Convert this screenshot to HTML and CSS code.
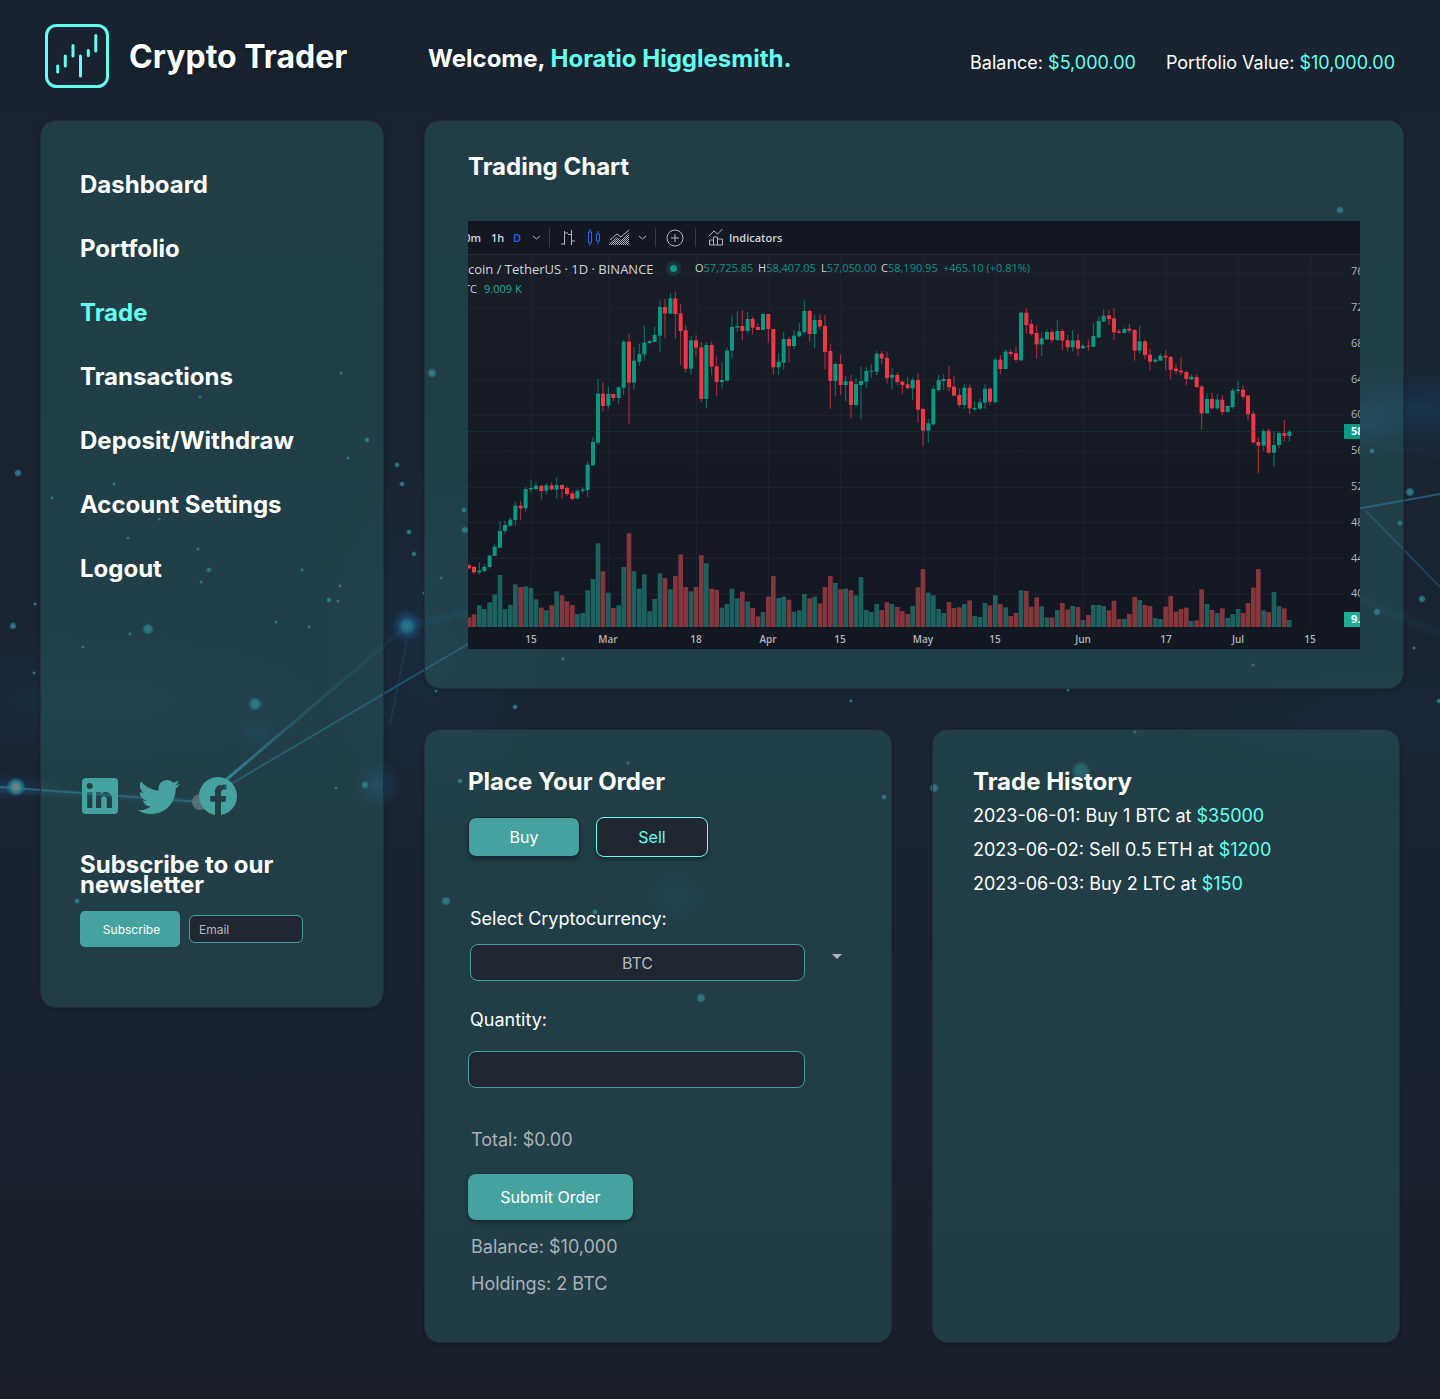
FILE: index.html
```html
<!DOCTYPE html>
<html lang="en">
<head>
<meta charset="utf-8">
<meta name="viewport" content="width=device-width, initial-scale=1">
<title>Crypto Trader</title>
<link rel="stylesheet" href="styles.css">
</head>
<body>
<svg class="scene" viewBox="0 0 1440 1399" preserveAspectRatio="xMidYMin slice" aria-hidden="true">
  <defs>
    <radialGradient id="glow"><stop offset="0" stop-color="#1f6a9c" stop-opacity=".8"/><stop offset="1" stop-color="#1f5f9c" stop-opacity="0"/></radialGradient>
    <radialGradient id="dot"><stop offset="0" stop-color="#348a90"/><stop offset=".6" stop-color="#2b7d89" stop-opacity=".9"/><stop offset="1" stop-color="#1f6a90" stop-opacity="0"/></radialGradient>
    <linearGradient id="ray" gradientUnits="userSpaceOnUse" x1="220" y1="785" x2="407" y2="626"><stop offset="0" stop-color="#2f94a0"/><stop offset=".4" stop-color="#256080" stop-opacity=".5"/><stop offset="1" stop-color="#256080" stop-opacity=".1"/></linearGradient>
  </defs>
  <g fill="url(#glow)">
    <ellipse cx="100" cy="700" rx="240" ry="70" opacity=".14"/>
    <ellipse cx="430" cy="650" rx="120" ry="190" opacity=".12"/>
    <ellipse cx="1420" cy="410" rx="170" ry="44" opacity=".3"/>
    <ellipse cx="1364" cy="423" rx="40" ry="24" opacity=".25"/>
    <ellipse cx="1420" cy="720" rx="260" ry="60" opacity=".08"/>
    <ellipse cx="0" cy="787" rx="64" ry="14" opacity=".4"/>
    <circle cx="407" cy="626" r="17"/>
    <circle cx="378" cy="785" r="24" opacity=".4"/>
    <circle cx="257" cy="733" r="20" opacity=".22"/>
    <circle cx="676" cy="897" r="28" opacity=".18"/>
  </g>
  <g fill="none" stroke="#256f95">
    <path d="M220 785 407 626" stroke="url(#ray)" stroke-width="3"/>
    <path d="M224 788 480 637" stroke-width="2" opacity=".6"/>
    <path d="M0 787 200 802" stroke="#2f94a0" stroke-width="2" opacity=".5"/>
    <path d="M0 789 200 802" stroke-width="7" opacity=".15"/>
    <path d="M407 640 390 725" stroke-width="2" opacity=".2"/>
    <path d="M415 624 480 610" stroke-width="8" opacity=".12"/>
    <path d="M1340 512 1440 494" stroke-width="2" opacity=".7"/>
    <path d="M1365 510 1440 587" stroke-width="2" opacity=".4"/>
    <path d="M1350 594 1440 634" stroke-width="8" opacity=".08"/>
    <path d="M1350 440 1440 455" stroke-width="8" opacity=".06"/>
  </g>
  <circle cx="200" cy="802" r="8" fill="#7b8082" opacity=".75"/>
  <circle cx="16" cy="787" r="10" fill="url(#dot)"/>
  <circle cx="16" cy="787" r="4" fill="#7b8082" opacity=".7"/>
  <g id="stars" fill="url(#dot)"></g>
</svg>

<div class="page">
  <header class="topbar">
    <div class="brand">
      <svg class="logo" viewBox="0 0 64 64" aria-hidden="true">
        <rect x="1.5" y="1.5" width="61" height="61" rx="10"/>
        <path d="M12.700 42v6M20.300 32v10M28 21.500v10.500M35.500 32v20M43.300 26.500v5M50.800 11.500v15.500"/>
      </svg>
      <span class="brand-name">Crypto Trader</span>
    </div>
    <div class="account">
      <p class="welcome">Welcome, <span class="accent">Horatio Higglesmith.</span></p>
      <div class="figures">
        <span>Balance: <span class="accent">$5,000.00</span></span>
        <span>Portfolio Value: <span class="accent">$10,000.00</span></span>
      </div>
    </div>
  </header>

  <div class="layout">
    <aside class="panel sidebar">
      <nav class="menu">
        <a href="#dashboard">Dashboard</a>
        <a href="#portfolio">Portfolio</a>
        <a href="#trade" class="current" aria-current="page">Trade</a>
        <a href="#transactions">Transactions</a>
        <a href="#deposit">Deposit/Withdraw</a>
        <a href="#settings">Account Settings</a>
        <a href="#logout">Logout</a>
      </nav>
      <div class="social">
        <a href="#linkedin" aria-label="LinkedIn"><svg viewBox="2 2 20 20"><path d="M19 3a2 2 0 0 1 2 2v14a2 2 0 0 1-2 2H5a2 2 0 0 1-2-2V5a2 2 0 0 1 2-2h14m-1 15v-4.800a3.260 3.260 0 0 0-3.260-3.260c-.85 0-1.840.52-2.320 1.300v-1.110h-2.420v7.870h2.600v-4.430c0-.77.62-1.400 1.390-1.400a1.400 1.400 0 0 1 1.400 1.400v4.430h2.610M6.880 8.560a1.500 1.500 0 0 0 1.500-1.500c0-.83-.67-1.500-1.500-1.500a1.500 1.500 0 0 0-1.500 1.500c0 .83.67 1.500 1.500 1.500m1.300 9.440v-7.870H5.600v7.870h2.580z"/></svg></a>
        <a href="#twitter" aria-label="Twitter"><svg viewBox="2 2 20 20"><path d="M22.460 6c-.77.35-1.600.58-2.460.69.88-.53 1.560-1.370 1.880-2.380-.83.5-1.750.85-2.720 1.050C18.370 4.500 17.260 4 16 4c-2.350 0-4.270 1.920-4.270 4.290 0 .34.04.67.11.98C8.280 9.090 5.110 7.380 3 4.790c-.37.63-.58 1.370-.58 2.150 0 1.490.75 2.810 1.910 3.560-.71 0-1.370-.2-1.950-.5v.03c0 2.080 1.480 3.820 3.440 4.210a4.220 4.220 0 0 1-1.930.07 4.280 4.280 0 0 0 4 2.980 8.521 8.521 0 0 1-5.330 1.840c-.34 0-.68-.02-1.020-.06C3.440 20.290 5.700 21 8.120 21 16 21 20.330 14.460 20.330 8.790c0-.19 0-.37-.01-.56.84-.6 1.560-1.360 2.140-2.230z"/></svg></a>
        <a href="#facebook" aria-label="Facebook"><svg viewBox="1.500 1.500 21 21"><path d="M12 2.040C6.500 2.040 2 6.530 2 12.060C2 17.060 5.660 21.210 10.440 21.960V14.960H7.900V12.060H10.440V9.850C10.440 7.340 11.930 5.960 14.220 5.960C15.310 5.960 16.450 6.150 16.450 6.150V8.620H15.190C13.950 8.620 13.560 9.390 13.560 10.180V12.060H16.340L15.890 14.960H13.560V21.960A10 10 0 0 0 22 12.060C22 6.530 17.500 2.040 12 2.040Z"/></svg></a>
      </div>
      <h2 class="newsletter-title">Subscribe to our newsletter</h2>
      <form class="newsletter">
        <button type="button" class="subscribe">Subscribe</button>
        <input class="email" type="email" placeholder="Email" aria-label="Email">
      </form>
    </aside>

    <main class="content">
      <section class="panel chart-panel">
        <h2>Trading Chart</h2>
        <svg class="chart" viewBox="0 0 892 428" role="img" aria-label="Bitcoin / TetherUS daily candlestick chart">
          <defs>
            <linearGradient id="plot" x2="0" y2="1"><stop offset="0" stop-color="#191d28"/><stop offset="1" stop-color="#131722"/></linearGradient>
            <pattern id="hatch" width="2" height="2" patternUnits="userSpaceOnUse"><path d="M0 0h1v1H0zM1 1h1v1H1z" fill="#b2b5be"/></pattern>
          </defs>
          <rect width="892" height="428" fill="#131722"/>
          <rect y="34" width="892" height="372" fill="url(#plot)"/>
          <path d="M0 33.500h892" stroke="#2a2e39"/>

          <g class="tools">
            <text x="13" y="21" text-anchor="end">30m</text>
            <text x="23" y="21">1h</text>
            <text x="45" y="21" class="on">D</text>
            <text x="261" y="21">Indicators</text>
            <path d="M81.500 7v19M187.500 7v19M227.500 7v19" class="rule"/>
            <g class="glyph">
              <path d="m65 15 3.500 3 3.500-3M171 15l3.500 3 3.500-3"/>
              <path d="M96.500 10v14M93 23h3.500M96.500 12h3.500M103.500 9v15M100 13.500h3.500M103.500 20h3.500"/>
              <circle cx="207" cy="17" r="8"/><path d="M203 17h8M207 13v8"/>
              <path d="M241.500 24v-5h4v5zM245.500 24v-8h4v8zM249.500 24v-6h5v6zM241 15l5-5 3.500 3 5-5"/>
              <path d="m142 19 7-6 4 3 8-7"/>
            </g>
            <path d="m141 24 0-2 8-6 4 3 8-7v12z" fill="url(#hatch)"/>
            <path class="glyph-on" d="M120.500 11h3v11h-3zM122 8v3M122 22v3M128.500 13h3v7h-3zM130 10v3M130 20v3"/>
          </g>

          <g id="plot-data" transform="scale(.333333)"></g>

          <text class="pair" x="0" y="53">coin / TetherUS · 1D · BINANCE</text>
          <circle cx="205.500" cy="47.500" r="7.500" fill="#17353b"/><circle cx="205.500" cy="47.500" r="3.500" fill="#089981"/>
          <g class="ohlc">
            <text x="227" y="51">O<tspan>57,725.85</tspan></text>
            <text x="290" y="51">H<tspan>58,407.05</tspan></text>
            <text x="353" y="51">L<tspan>57,050.00</tspan></text>
            <text x="413" y="51">C<tspan>58,190.95</tspan></text>
            <text x="475" y="51"><tspan>+465.10 (+0.81%)</tspan></text>
            <text x="9" y="72" text-anchor="end">TC</text>
            <text x="16" y="72"><tspan class="vol">9.009 K</tspan></text>
          </g>

          <g class="axis">
            <text x="883" y="54">76</text><text x="883" y="90">72</text><text x="883" y="126">68</text>
            <text x="883" y="162">64</text><text x="883" y="197">60</text><text x="883" y="233">56</text>
            <text x="883" y="269">52</text><text x="883" y="305">48</text><text x="883" y="341">44</text>
            <text x="883" y="376">40</text>
            <rect x="876" y="203" width="16" height="15" fill="#089981"/><text x="883" y="214" class="tag">58</text>
            <rect x="876" y="391" width="16" height="15" fill="#22ab94"/><text x="883" y="402" class="tag">9.</text>
          </g>
          <g class="axis dates">
            <text x="63" y="422">15</text><text x="140" y="422">Mar</text><text x="228" y="422">18</text>
            <text x="300" y="422">Apr</text><text x="372" y="422">15</text><text x="455" y="422">May</text>
            <text x="527" y="422">15</text><text x="615" y="422">Jun</text><text x="698" y="422">17</text>
            <text x="770" y="422">Jul</text><text x="842" y="422">15</text>
          </g>
        </svg>
      </section>

      <div class="lower">
        <section class="panel order">
          <h2>Place Your Order</h2>
          <form>
            <div class="sides">
              <button type="button" class="side buy">Buy</button>
              <button type="button" class="side sell">Sell</button>
            </div>
            <label for="coin" class="coin-label">Select Cryptocurrency:</label>
            <div class="coin-row">
              <select id="coin" class="field"><option>BTC</option><option>ETH</option><option>LTC</option></select>
              <svg class="caret" viewBox="0 0 10 5" aria-hidden="true"><path d="M0 0h10L5 5z"/></svg>
            </div>
            <label for="qty" class="qty-label">Quantity:</label>
            <input id="qty" class="field qty" type="text" inputmode="decimal">
            <p class="note total">Total: $0.00</p>
            <button type="button" class="submit">Submit Order</button>
            <p class="note balance">Balance: $10,000</p>
            <p class="note">Holdings: 2 BTC</p>
          </form>
        </section>

        <section class="panel history">
          <h2>Trade History</h2>
          <ul>
            <li>2023-06-01: Buy 1 BTC at <span class="accent">$35000</span></li>
            <li>2023-06-02: Sell 0.5 ETH at <span class="accent">$1200</span></li>
            <li>2023-06-03: Buy 2 LTC at <span class="accent">$150</span></li>
          </ul>
        </section>
      </div>
    </main>
  </div>
</div>
<script src="chart.js"></script>
</body>
</html>
```
FILE: styles.css
```css
*, *::before, *::after { box-sizing: border-box; }

body {
  margin: 0;
  position: relative;
  background: linear-gradient(#18232f 0%, #182431 50%, #18222e 75%, #1a1f2b 100%);
  color: #fff;
  font-family: Inter, "Liberation Sans", sans-serif;
  font-size: 18px;
  line-height: 22px;
}

h2, p, ul { margin: 0; padding: 0; }
h2 { font-size: 24px; line-height: 30px; font-weight: 700; }
a { color: inherit; text-decoration: none; }
button, input, select { font-family: inherit; margin: 0; }
.accent { color: #64ffee; }

.scene {
  position: absolute;
  inset: 0;
  width: 100%;
  height: 100%;
  z-index: -1;
}

.page { padding: 0 36px 56px 40px; }

.topbar, .layout {
  display: grid;
  grid-template-columns: 344px minmax(0, 1fr);
  column-gap: 40px;
  align-items: start;
}
.topbar { height: 120px; padding-top: 24px; }

.brand { display: flex; align-items: center; gap: 20px; padding-left: 5px; }
.logo { width: 64px; height: 64px; fill: none; stroke: #64ffee; stroke-width: 3; stroke-linecap: round; }
.brand-name { padding-top: 2px; font-size: 32px; line-height: 40px; font-weight: 700; text-shadow: 0 2px 4px rgba(0, 0, 0, .3); }

.account {
  display: flex;
  justify-content: space-between;
  align-items: flex-end;
  height: 49px;
  padding: 0 9px 0 4px;
}
.welcome { font-size: 24px; line-height: 28px; font-weight: 700; }
.figures { display: flex; gap: 30px; line-height: 20px; }

.panel {
  background: rgba(52, 120, 121, .32);
  border: 1px solid #262e3a;
  border-radius: 16px;
  box-shadow: 0 2px 4px rgba(0, 0, 0, .15);
}

.sidebar { padding: 52px 39px 60px; }
.menu { display: flex; flex-direction: column; gap: 40px; font-size: 24px; line-height: 24px; font-weight: 700; }
.menu .current { color: #64ffee; }

.social { display: flex; gap: 19px; margin-top: 195px; }
.social a { display: block; height: 40px; }
.social svg { width: 40px; height: 40px; fill: #46a29f; overflow: visible; }

.newsletter-title { margin-top: 39px; line-height: 20px; }
.newsletter { display: flex; align-items: center; gap: 9px; margin-top: 16px; font-size: 12px; }
.subscribe {
  width: 100px; height: 36px; padding: 0 0 0 3px;
  border: 0; border-radius: 5px;
  background: #46a29f; color: #fff; font-size: 12px;
}
.email {
  width: 114px; height: 28px; padding: 0 9px;
  border: 1px solid #46a29f; border-radius: 6px;
  background: #202733; color: #fff; font-size: 12px;
}
.email::placeholder { color: #b4b8be; opacity: 1; }

.content { display: grid; gap: 40px; }
.chart-panel { padding: 31px 43px 39px; }
.chart { display: block; width: 100%; height: auto; margin-top: 39px; font-family: "Open Sans", "Noto Sans", sans-serif; }
.tools text { fill: #d1d4dc; font-size: 11px; font-weight: 600; }
.tools .on { fill: #2962ff; }
.rule { stroke: #363a45; }
.glyph { fill: none; stroke: #b2b5be; }
.glyph-on { fill: none; stroke: #2962ff; }
.pair { fill: #d1d4dc; font-size: 13px; font-weight: 500; }
.ohlc text { fill: #d1d4dc; font-size: 11px; font-weight: 500; }
.ohlc tspan { fill: #0b9580; }
.ohlc .vol { fill: #22ab94; }
.axis text { fill: #b2b5be; font-size: 11px; font-weight: 500; }
.axis .tag { fill: #fff; font-weight: 700; }
.dates text { text-anchor: middle; font-weight: 600; font-size: 10px; }
.grid { stroke: #20242f; stroke-width: 3; }
.last { stroke: #0a5f57; stroke-width: 2; stroke-dasharray: 6 3; opacity: .8; }

.lower { display: grid; grid-template-columns: 1fr 1fr; gap: 40px; padding-right: 4px; }
.order { padding: 37px 43px 47px; }
.sides { display: flex; gap: 16px; margin-top: 20px; }
.side {
  width: 112px; height: 40px; padding: 0;
  border: 1px solid #202733; border-radius: 8px;
  font-size: 16px;
  box-shadow: 0 3px 4px rgba(0, 0, 0, .3);
}
.buy { background: #46a29f; color: #fff; }
.sell { background: #202733; border-color: #64ffee; color: #64ffee; }

.order label { display: block; padding-left: 2px; }
.coin-label { margin-top: 51px; }
.coin-row { display: flex; gap: 27px; margin-top: 14px; padding-left: 2px; }
.field {
  display: block;
  height: 37px; padding: 0 12px;
  border: 1px solid #46a29f; border-radius: 8px;
  background: #202733; color: #b4b8be; font-size: 16px;
}
select.field { appearance: none; width: 335px; text-align: center; text-align-last: center; }
.caret { width: 10px; height: 5px; margin-top: 10px; fill: #b4b8be; }
.qty-label { margin-top: 28px; }
.qty { width: 337px; margin-top: 20px; }
.note { margin-top: 15px; padding-left: 3px; color: #aab1b8; }
.total { margin-top: 41px; }
.submit {
  display: block;
  width: 165px; height: 46px; margin-top: 23px; padding: 0;
  border: 0; border-radius: 8px;
  background: #46a29f; color: #fff; font-size: 16px;
  box-shadow: 0 2px 4px rgba(0, 0, 0, .4);
}
.balance { margin-top: 16px; }

.history { padding: 37px 40px; }
.history ul { list-style: none; line-height: 34px; margin-top: 2px; }
```
FILE: chart.js
```js
// Each candle: direction, high, body top, body bottom, low, volume top.
const candles = `
d 1047 1051 1060 1062 562|d 1053 1056 1072 1078 553|u 1041 1067 1072 1079 526|u 1048 1056 1068 1072 537
u 1019 1022 1056 1061 517|u 987 995 1023 1023 493|u 918 948 998 998 435|u 918 930 948 956 537
u 908 914 932 935 525|u 861 872 915 932 463|d 858 872 880 915 471|u 816 822 880 890 469
u 794 819 823 834 474|u 801 812 822 827 508|d 810 812 828 853 533|u 805 811 827 839 541
d 802 811 823 826 526|u 788 810 824 850 484|d 807 810 822 852 496|d 814 819 837 843 514
d 827 835 852 857 525|u 823 827 850 854 552|u 817 824 828 835 549|u 738 749 825 846 481
u 666 681 751 751 447|u 492 536 683 690 340|d 501 536 573 590 424|u 516 537 572 581 488
d 536 537 549 558 534|u 514 517 549 566 526|u 374 380 518 540 411|d 357 380 503 627 310
u 396 437 503 525 424|u 386 417 440 452 476|u 333 383 418 437 433|u 374 378 384 388 544
u 335 360 381 381 507|u 257 276 362 411 430|d 252 276 295 370 444|u 235 250 296 296 478
d 231 250 297 371 438|d 266 295 348 450 373|d 330 346 461 473 471|u 363 376 461 478 484
d 360 376 398 425 471|d 382 397 552 561 376|u 381 390 552 580 400|d 380 390 455 481 476
d 421 454 501 543 480|u 440 495 501 520 533|u 396 407 497 500 522|u 302 336 407 430 476
u 289 333 338 351 505|d 285 333 348 376 485|u 291 312 348 355 514|d 306 312 338 358 534
d 324 336 345 345 559|u 294 297 345 345 546|d 297 297 342 383 500|d 341 342 457 479 438
u 414 440 457 480 504|u 351 372 443 463 500|d 365 372 393 441 509|u 345 362 393 402 545
u 324 350 364 366 541|u 257 288 351 357 492|d 284 288 357 380 505|u 300 315 357 398 500
d 297 315 334 343 520|d 300 333 411 463 471|d 388 408 498 581 438|u 443 447 498 543 459
d 418 447 510 540 478|u 484 499 510 558 476|d 480 499 570 610 481|u 490 507 570 578 496
u 455 498 510 612 441|u 457 468 500 518 540|u 448 467 470 488 546|u 407 416 470 480 522
d 408 416 431 448 540|d 410 429 489 506 517|u 459 480 488 525 522|d 473 480 501 510 531
d 496 500 510 537 543|d 486 508 519 524 552|u 488 495 520 554 528|d 474 495 584 622 472
d 578 582 647 693 417|u 612 625 647 683 488|u 512 522 628 632 496|u 480 495 525 530 537
u 477 492 498 525 549|d 453 492 517 528 516|d 482 515 542 542 534|d 520 540 570 577 532
u 508 518 570 582 522|d 508 518 580 596 511|u 560 579 583 588 558|u 550 562 581 585 561
u 508 521 563 581 519|d 516 521 560 570 526|u 428 434 561 566 496|d 420 434 462 477 522
u 403 410 462 462 532|d 403 411 417 425 558|d 394 415 435 443 549|u 290 293 436 438 481
d 280 293 330 355 483|d 314 327 357 362 530|d 331 354 388 431 502|u 352 370 388 423 529
u 343 351 373 376 562|d 343 351 375 384 562|u 314 348 375 378 540|d 342 348 377 405 519
d 360 376 397 410 538|u 346 376 397 410 528|d 357 376 401 422 531|u 386 392 400 402 570
d 374 392 395 407 555|u 324 363 395 397 525|u 304 318 367 370 525|u 284 302 319 322 528
d 286 301 312 330 541|d 279 310 352 375 512|d 342 349 353 355 567|u 337 342 354 356 567
d 327 341 347 354 552|d 342 345 407 437 501|u 333 379 407 416 510|d 374 379 420 432 525
d 401 419 440 465 528|u 428 434 440 444 564|u 415 422 437 438 567|d 405 422 428 465 530
d 423 426 464 492 498|d 447 461 468 477 545|d 427 467 472 480 537|d 467 471 492 510 533
u 478 485 493 495 573|d 478 486 516 519 571|d 510 515 595 644 478|u 535 552 595 597 522
d 533 552 580 582 540|u 537 554 580 584 549|d 540 554 591 600 535|u 570 573 591 592 564
u 520 527 576 581 552|u 498 524 528 535 537|d 511 524 545 553 549|d 540 542 598 617 519
d 588 596 682 686 473|d 667 681 692 774 417|u 641 648 692 708 541|d 641 647 713 716 546
u 648 690 713 755 486|u 650 654 690 700 529|d 615 654 663 678 535|u 645 650 663 680 570`;

const TOP = 18;
const VOLUME_BASE = 591;
const STEP = 15.48;
const BASELINE = 1218;

let out = '';
for (const y of [154, 262, 369, 475, 583, 691, 799, 905, 1012, 1120]) out += `<path class="grid" d="M0 ${y}H2628"/>`;
for (const x of [190, 421, 685, 901, 1117, 1366, 1582, 1846, 2095, 2311, 2527]) out += `<path class="grid" d="M${x} 102V${BASELINE}"/>`;

candles.trim().split(/[|\n]/).forEach((row, i) => {
  const [dir, ...rest] = row.trim().split(' ');
  const [high, top, bottom, low, vol] = rest.map(Number);
  const x = Math.round(3 + i * STEP);
  const color = dir === 'u' ? '#089981' : '#f23645';
  const volColor = dir === 'u' ? '#1d615f' : '#85363c';
  out += `<rect x="${x - 7}" y="${BASELINE - VOLUME_BASE + vol}" width="14" height="${VOLUME_BASE - vol}" fill="${volColor}"/>`;
  out += `<rect x="${x - 1.5}" y="${high - TOP}" width="3" height="${low - high}" fill="${color}" opacity=".75"/>`;
  out += `<rect x="${x - 6}" y="${top - TOP}" width="12" height="${Math.max(bottom - top, 3)}" fill="${color}"/>`;
});
out += '<path class="last" d="M0 632H2628"/>';
document.getElementById('plot-data').innerHTML = out;

// Background particles: x, y, radius.
const stars = [
  [18, 473, 4], [13, 626, 4], [35, 604, 2], [34, 673, 2], [52, 498, 2], [114, 484, 2], [200, 397, 2], [341, 373, 2],
  [367, 440, 3], [348, 458, 2], [397, 465, 3], [402, 484, 3], [432, 373, 5], [159, 519, 2], [128, 538, 2], [198, 549, 2],
  [209, 570, 3], [201, 582, 2], [302, 570, 2], [340, 586, 2], [329, 600, 3], [338, 601, 2], [148, 629, 6], [130, 634, 2],
  [83, 647, 2], [276, 622, 2], [309, 627, 2], [409, 532, 3], [414, 554, 3], [464, 510, 3], [465, 530, 4], [441, 578, 2],
  [424, 593, 2], [255, 704, 7], [436, 691, 2], [365, 785, 4], [336, 788, 2], [77, 901, 3], [1340, 210, 4], [1372, 451, 3],
  [1410, 492, 5], [1400, 523, 3], [1422, 599, 4], [1377, 612, 4], [1414, 648, 2], [1439, 701, 3], [1253, 665, 2],
  [1068, 690, 2], [851, 701, 2], [515, 707, 3], [563, 659, 2], [628, 763, 2], [460, 781, 3], [884, 797, 3], [934, 788, 5],
  [446, 901, 5], [595, 912, 3], [701, 998, 5], [1135, 732, 2], [1081, 771, 10], [407, 626, 9],
];
document.getElementById('stars').innerHTML = stars
  .map(([x, y, r]) => `<circle cx="${x}" cy="${y}" r="${r}" opacity="${r > 8 ? 0.6 : 0.9}"/>`)
  .join('');
```
